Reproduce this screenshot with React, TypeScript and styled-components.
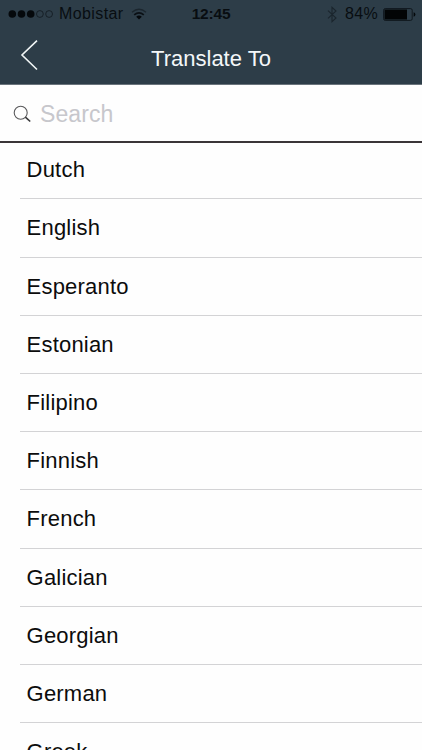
import React from "react";
import styled, { createGlobalStyle } from "styled-components";

const GlobalStyle = createGlobalStyle`
  * { box-sizing: border-box; }
  html, body { margin: 0; padding: 0; }
  body {
    background: #fefefe;
    font-family: "Liberation Sans", Arial, sans-serif;
    overflow: hidden;
  }
`;

const Screen = styled.main`
  width: 422px;
  height: 750px;
  display: flex;
  flex-direction: column;
  overflow: hidden;
  background: #fefefe;
`;

const Header = styled.header`
  flex: none;
  height: 85px;
  background: #2d3d48;
  border-bottom: 1px solid #6a747c;
`;

const StatusBar = styled.div`
  height: 28px;
  display: grid;
  grid-template-columns: 1fr auto 1fr;
  align-items: center;
  padding: 0 6px 0 8px;
  color: #080d11;
`;

const StatusGroup = styled.div<{ $end?: boolean }>`
  display: flex;
  align-items: center;
  justify-content: ${(p) => (p.$end ? "flex-end" : "flex-start")};
`;

const StatusText = styled.span<{ $spacing?: number }>`
  font-size: 16px;
  line-height: 28px;
  letter-spacing: ${(p) => p.$spacing ?? 0}px;
`;

const Clock = styled.time`
  margin-right: 2px;
  font-size: 15.5px;
  font-weight: 700;
  line-height: 28px;
  letter-spacing: -0.2px;
`;

const SignalIcon = styled.svg`
  margin-right: 5px;
`;

const WifiIcon = styled.svg`
  margin-left: 7px;
`;

const BluetoothIcon = styled.svg`
  margin-right: 8px;
`;

const BatteryIcon = styled.svg`
  margin-left: 5px;
`;

const NavBar = styled.nav`
  height: 56px;
  display: grid;
  grid-template-columns: 60px 1fr 60px;
  align-items: start;
`;

const BackButton = styled.button`
  height: 54px;
  padding: 0 0 0 20px;
  border: 0;
  background: none;
  display: flex;
  align-items: center;
`;

const Title = styled.h1`
  margin: 3px 0 0;
  font-size: 22px;
  line-height: 56px;
  font-weight: 400;
  text-align: center;
  color: #f4f7f9;
`;

const SearchBar = styled.label`
  flex: none;
  height: 58px;
  padding: 2px 13px 0;
  display: flex;
  align-items: center;
  gap: 8px;
  border-bottom: 2px solid #3a3538;
`;

const SearchInput = styled.input`
  flex: 1;
  min-width: 0;
  border: 0;
  outline: 0;
  padding: 0;
  background: transparent;
  font: 23px "Liberation Sans", Arial, sans-serif;
  letter-spacing: 0.1px;
  color: #111;
  &::placeholder {
    color: #c7c7cc;
    opacity: 1;
  }
`;

const ListViewport = styled.div`
  flex: 1;
  min-height: 0;
  overflow: hidden;
`;

const List = styled.ul`
  list-style: none;
  margin: -1.8px 0 0;
  padding: 0 0 0 20px;
`;

const Row = styled.li`
  height: 58.2px;
  padding-left: 6.6px;
  border-bottom: 1px solid #d3d3d5;
  font-size: 22px;
  line-height: 57px;
  letter-spacing: 0.2px;
  color: #0c0c0c;
`;

const languages = [
  "Dutch",
  "English",
  "Esperanto",
  "Estonian",
  "Filipino",
  "Finnish",
  "French",
  "Galician",
  "Georgian",
  "German",
  "Greek",
];

export default function App() {
  return (
    <Screen>
      <GlobalStyle />
      <Header>
        <StatusBar>
          <StatusGroup>
            <SignalIcon width="46" height="10" viewBox="0 0 46 10">
              {[0, 1, 2, 3, 4].map((i) => (
                <circle
                  key={i}
                  cx={4.3 + i * 9.2}
                  cy="5"
                  r={i < 3 ? 3.8 : 3.4}
                  fill={i < 3 ? "#05090c" : "none"}
                  stroke={i < 3 ? "none" : "#10181e"}
                  strokeWidth="0.8"
                />
              ))}
            </SignalIcon>
            <StatusText $spacing={0.4}>Mobistar</StatusText>
            <WifiIcon width="16" height="12" viewBox="0 0 16 12" fill="none">
              <path d="M1 4.3Q8-1.6 15 4.3" stroke="#1b262e" strokeWidth="1.4" />
              <path d="M3.2 6.9Q8 2.8 12.8 6.9" stroke="#0a1015" strokeWidth="1.7" />
              <path d="M5.2 8.7Q8 6.5 10.8 8.7L8 11.4Z" fill="#05090c" />
            </WifiIcon>
          </StatusGroup>
          <Clock>12:45</Clock>
          <StatusGroup $end>
            <BluetoothIcon width="10" height="17" viewBox="0 0 10 17" fill="none">
              <path
                d="M1 4.7L9 12L5 15.7V1.3L9 5L1 12.3"
                stroke="#1a252d"
                strokeWidth="1.1"
              />
            </BluetoothIcon>
            <StatusText $spacing={0.3}>84%</StatusText>
            <BatteryIcon width="33" height="13" viewBox="0 0 33 13">
              <rect x="0.6" y="0.6" width="28.6" height="11.8" rx="1.6" fill="none" stroke="#10181e" />
              <rect x="1.5" y="1.5" width="22.5" height="10" fill="#020405" />
              <path d="M30.6 4.3Q32.4 4.8 32.4 6.5T30.6 8.7Z" fill="#05090c" />
            </BatteryIcon>
          </StatusGroup>
        </StatusBar>
        <NavBar>
          <BackButton aria-label="Back">
            <svg width="19" height="32" viewBox="0 0 19 32" fill="none">
              <path d="M17 1.7L2 16L17 30.5" stroke="#f1f6f6" strokeWidth="1.6" />
            </svg>
          </BackButton>
          <Title>Translate To</Title>
        </NavBar>
      </Header>
      <SearchBar>
        <svg width="19" height="18" viewBox="0 0 19 18" fill="none">
          <circle cx="7.7" cy="7.7" r="6.5" stroke="#59595b" strokeWidth="1.1" />
          <path d="M12.4 12.2L17.2 16.5" stroke="#39393b" strokeWidth="1.6" />
        </svg>
        <SearchInput placeholder="Search" />
      </SearchBar>
      <ListViewport>
        <List>
          {languages.map((name) => (
            <Row key={name}>{name}</Row>
          ))}
        </List>
      </ListViewport>
    </Screen>
  );
}
